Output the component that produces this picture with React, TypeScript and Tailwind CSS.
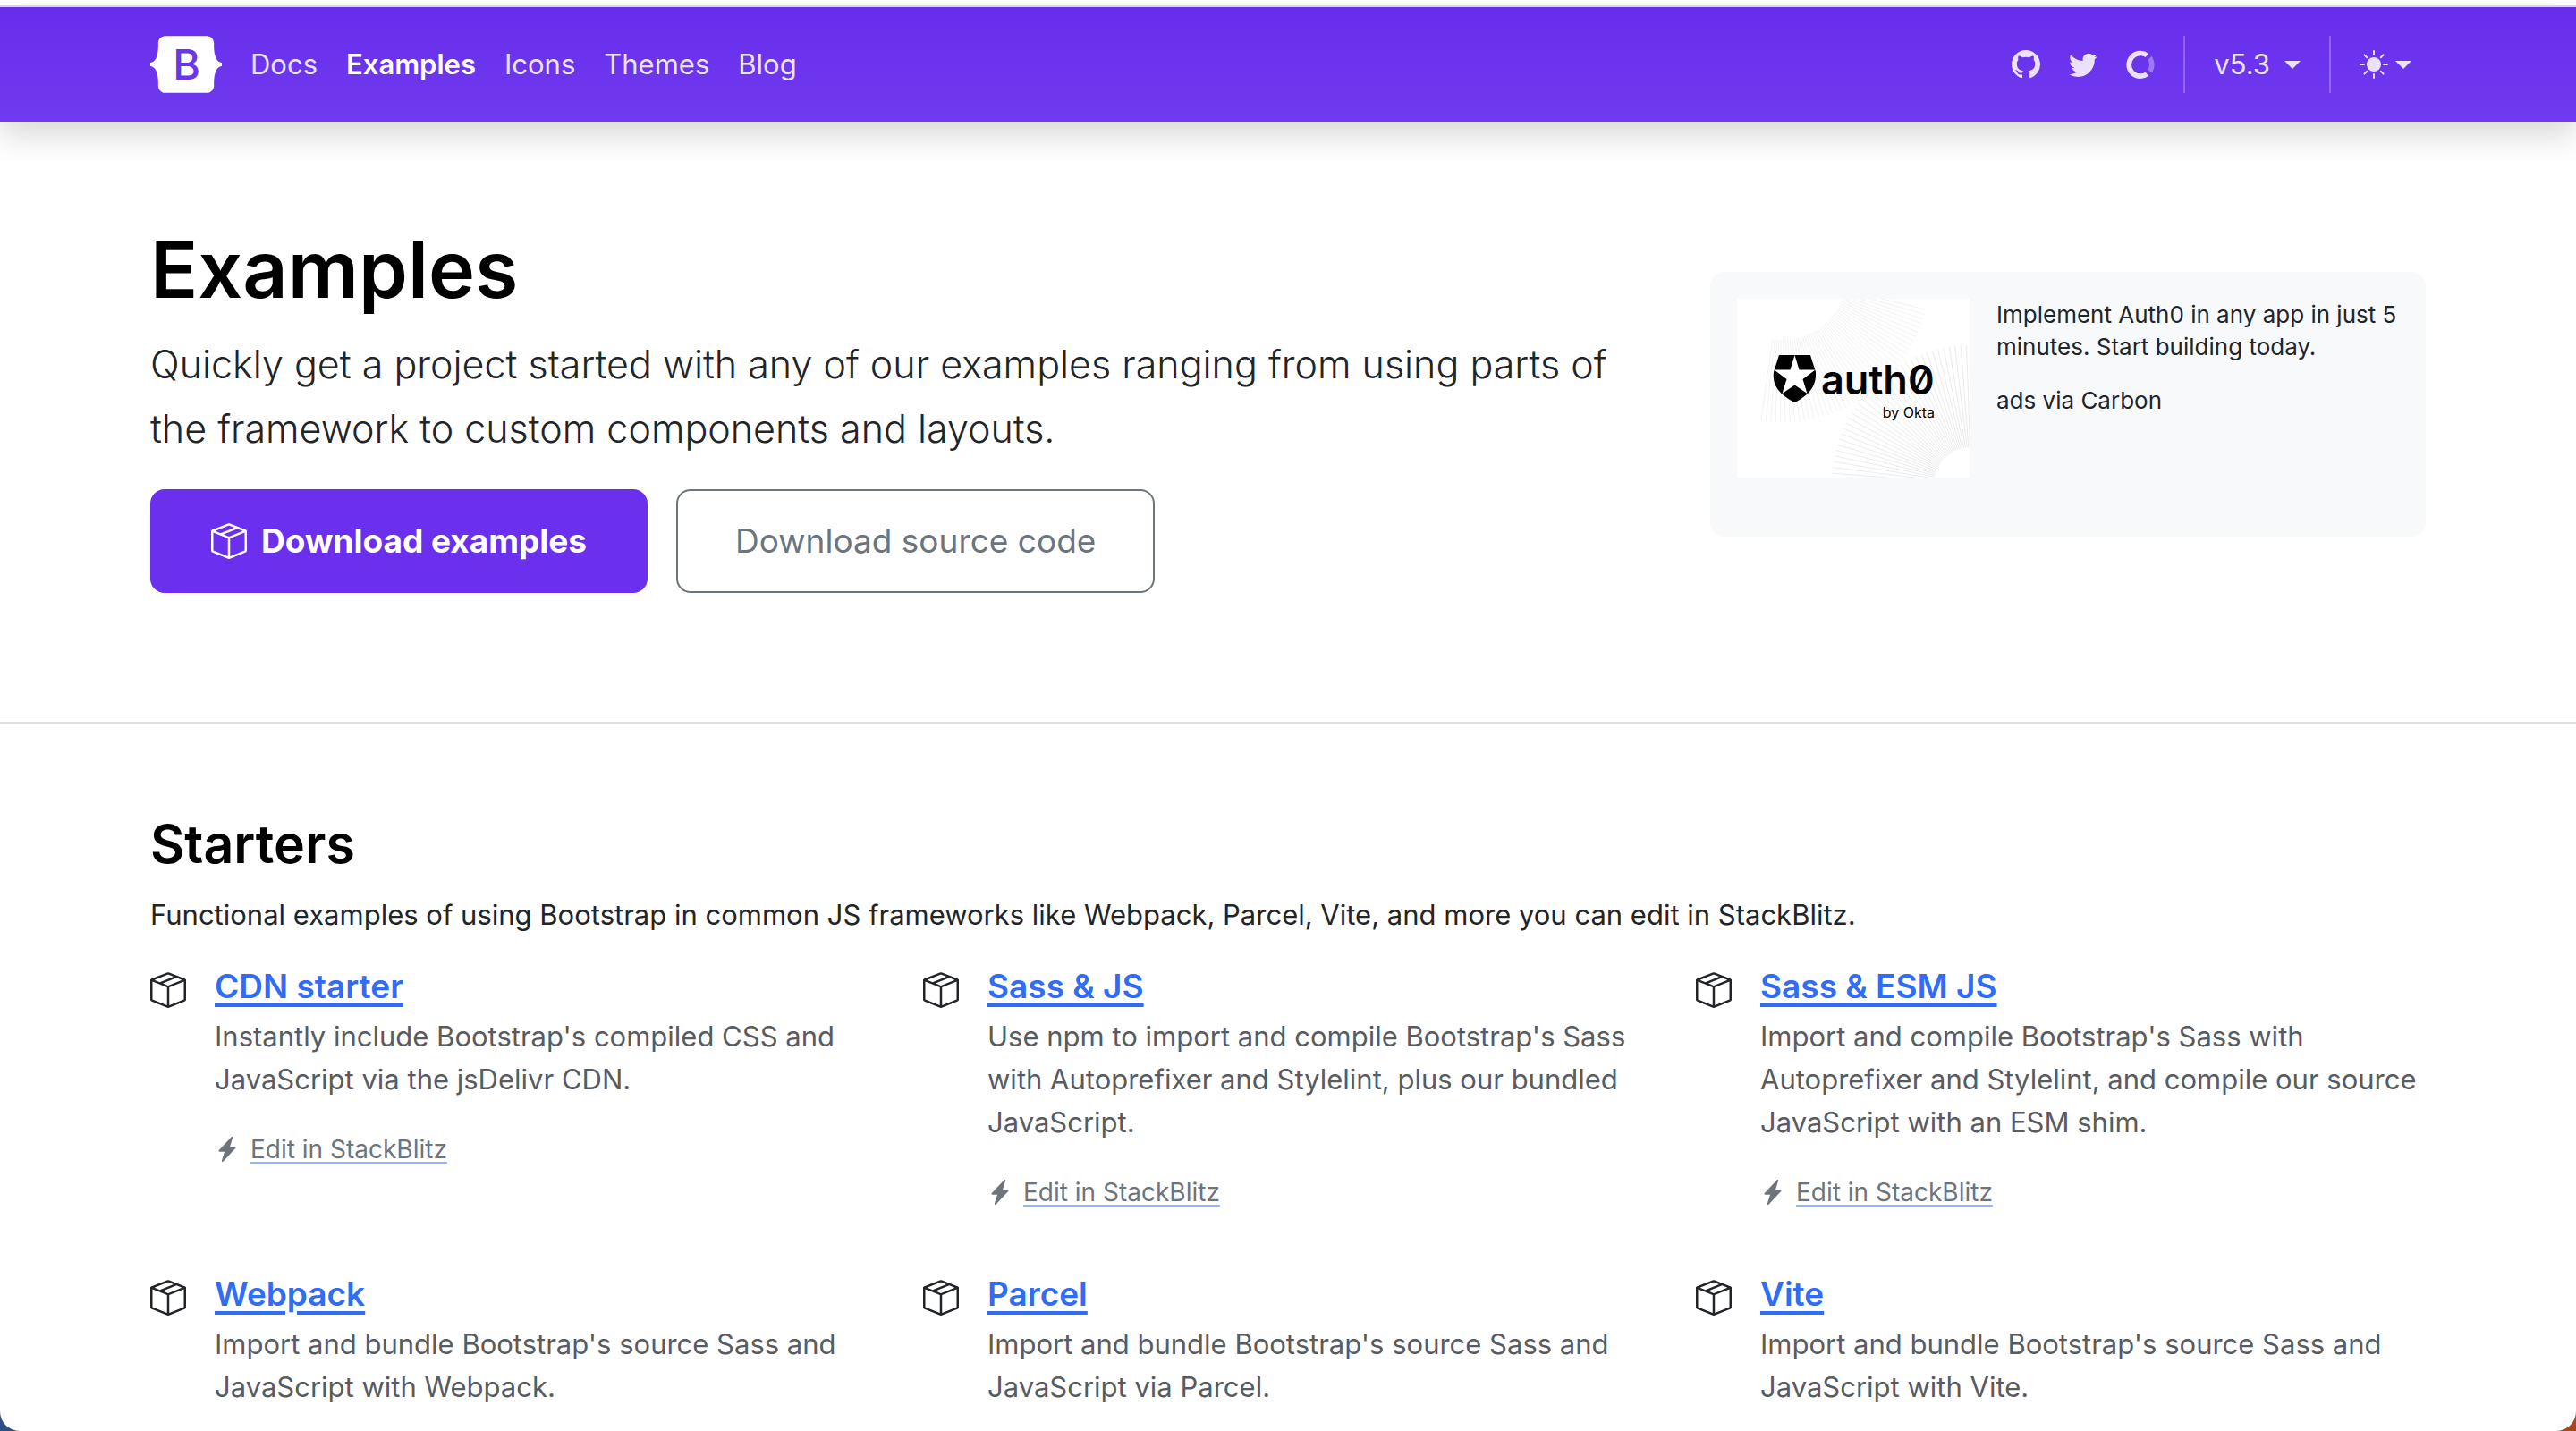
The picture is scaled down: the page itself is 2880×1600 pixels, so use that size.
import React from "react";
import { BsBoxSeam, BsGithub, BsTwitter, BsLightningChargeFill, BsSunFill } from "react-icons/bs";

const navLinks = [
  { label: "Docs", active: false },
  { label: "Examples", active: true },
  { label: "Icons", active: false },
  { label: "Themes", active: false },
  { label: "Blog", active: false },
];

const starters = [
  { title: "CDN starter", text: "Instantly include Bootstrap's compiled CSS and JavaScript via the jsDelivr CDN.", edit: true },
  { title: "Sass & JS", text: "Use npm to import and compile Bootstrap's Sass with Autoprefixer and Stylelint, plus our bundled JavaScript.", edit: true },
  { title: "Sass & ESM JS", text: "Import and compile Bootstrap's Sass with Autoprefixer and Stylelint, and compile our source JavaScript with an ESM shim.", edit: true },
  { title: "Webpack", text: "Import and bundle Bootstrap's source Sass and JavaScript with Webpack.", edit: false },
  { title: "Parcel", text: "Import and bundle Bootstrap's source Sass and JavaScript via Parcel.", edit: false },
  { title: "Vite", text: "Import and bundle Bootstrap's source Sass and JavaScript with Vite.", edit: false },
];

function BrandMark() {
  return (
    <svg viewBox="0 0 118 94" className="h-16 w-20" role="img" aria-label="Bootstrap">
      <path
        fill="#fff"
        d="M24.509 0c-6.733 0-11.715 5.893-11.492 12.284.214 6.14-.064 14.092-2.066 20.577C8.943 39.365 5.547 43.485 0 44.014v5.972c5.547.529 8.943 4.649 10.951 11.153 2.002 6.485 2.28 14.437 2.066 20.577C12.794 88.106 17.776 94 24.51 94H93.5c6.733 0 11.714-5.893 11.491-12.284-.214-6.14.064-14.092 2.066-20.577 2.009-6.504 5.396-10.624 10.943-11.153v-5.972c-5.547-.529-8.934-4.649-10.943-11.153-2.002-6.484-2.28-14.437-2.066-20.577C105.214 5.894 100.233 0 93.5 0H24.508z"
      />
      <text x="60" y="72" textAnchor="middle" fontFamily="Inter, sans-serif" fontSize="69" fontWeight="500" fill="#6d34ef">
        B
      </text>
    </svg>
  );
}

function OpenCollective() {
  return (
    <svg viewBox="0 0 40 41" className="size-8" fill="currentColor" fillRule="evenodd" aria-hidden="true">
      <path fillOpacity=".4" d="M32.8 21c0 2.4-.8 4.9-2 6.9l5.1 5.1c2.5-3.4 4.1-7.6 4.1-12 0-4.6-1.6-8.8-4-12.2L30.7 14c1.2 2 2 4.3 2 7z" />
      <path d="M20 33.7a12.8 12.8 0 0 1 0-25.6c2.6 0 5 .7 7 2.1L32 5a20 20 0 1 0 .1 31.9l-5-5.2a13 13 0 0 1-7 2z" />
    </svg>
  );
}

function Caret() {
  return <span aria-hidden="true" className="border-x-[9px] border-t-[9px] border-x-transparent border-t-current" />;
}

function fan(cx: number, cy: number, r1: number, r2: number, from: number, to: number, count: number) {
  return Array.from({ length: count }, (_, i) => {
    const a = ((from + ((to - from) * i) / (count - 1)) * Math.PI) / 180;
    const c = Math.cos(a);
    const s = Math.sin(a);
    return `M${(cx + r1 * c).toFixed(1)} ${(cy + r1 * s).toFixed(1)}L${(cx + r2 * c).toFixed(1)} ${(cy + r2 * s).toFixed(1)}`;
  }).join("");
}

function AdArtwork() {
  return (
    <svg viewBox="0 0 260 200" className="h-[200px] w-[260px] shrink-0 bg-white" role="img" aria-label="auth0 by Okta">
      <g fill="none" strokeWidth="1">
        <path stroke="#ebebeb" d={fan(262, 208, 42, 156, 180, 268, 38)} />
        <path stroke="#f2f2f2" d={fan(50, -28, 74, 166, 14, 98, 46)} />
      </g>
      <path d="M47 63H82L88 82C89 98 80 108 64.5 116C49 108 39 98 41 82Z" fill="#000" />
      <path
        d="M64.5 63L69.5 79.5H87.5L73.5 90L78.5 106L64.5 96.5L50.5 106L55.5 90L41.5 79.5H59.5Z"
        fill="#fff"
      />
      <text x="94" y="107" fontFamily="Inter, sans-serif" fontSize="45" fontWeight="600" fill="#000" style={{ fontFeatureSettings: '"zero"' }}>
        auth0
      </text>
      <text x="221" y="133" textAnchor="end" fontFamily="Inter, sans-serif" fontSize="16" fill="#000">by Okta</text>
    </svg>
  );
}

export default function App() {
  return (
    <div className="h-screen overflow-hidden bg-linear-to-r from-[#2f4f83] to-[#a5471c] font-['Inter',sans-serif] text-[#212529]">
      <div className="flex h-full flex-col overflow-hidden rounded-b-[22px] bg-white">
        <div className="h-2 shrink-0 border-b-2 border-[#dcdcdc] bg-white" />
        <header className="relative shrink-0 bg-linear-to-b from-[#672dec] to-[#703aef] px-[168px] shadow-[0_16px_32px_rgba(0,0,0,0.15)]">
          <nav className="flex h-32 items-center text-[31px] text-[#ebe1fd]">
            <a href="#home" className="mr-4"><BrandMark /></a>
            <ul className="flex">
              {navLinks.map((l) => (
                <li key={l.label}>
                  <a href="#nav" className={l.active ? "px-4 font-semibold text-white" : "px-4"}>{l.label}</a>
                </li>
              ))}
            </ul>
            <div className="ml-auto flex items-center">
              <div className="flex items-center gap-8">
                <a href="#github" aria-label="GitHub"><BsGithub className="size-8" /></a>
                <a href="#twitter" aria-label="Twitter"><BsTwitter className="size-8" /></a>
                <a href="#opencollective" aria-label="Open Collective"><OpenCollective /></a>
              </div>
              <span className="mx-8 h-16 w-0.5 bg-white/25" />
              <button type="button" className="flex items-center gap-4">v5.3 <Caret /></button>
              <span className="mx-8 h-16 w-0.5 bg-white/25" />
              <button type="button" aria-label="Toggle theme" className="mr-4 flex items-center gap-2">
                <BsSunFill className="size-8" /> <Caret />
              </button>
            </div>
          </nav>
        </header>

        <main className="grow">
          <section className="flex items-start justify-between border-b-2 border-[#dee2e6] px-[168px] pt-28 pb-36">
            <div className="w-[1660px]">
              <h1 className="text-[88px] leading-[107px] font-semibold text-black">Examples</h1>
              <p className="mt-4 text-[43px] leading-[72px] font-[350]">
                Quickly get a project started with any of our examples ranging from using parts of the framework to custom components and layouts.
              </p>
              <div className="mt-8 flex gap-8 text-[37px]">
                <button type="button" className="flex h-[116px] items-center gap-4 rounded-2xl bg-[#6a30ee] px-[68px] font-bold text-white">
                  <BsBoxSeam className="size-10" /> Download examples
                </button>
                <button type="button" className="h-[116px] rounded-2xl border-2 border-[#6c757d] px-16 text-[#6c757d]">
                  Download source code
                </button>
              </div>
            </div>
            <aside className="mt-14 flex min-h-[296px] w-[800px] items-start gap-[30px] rounded-2xl bg-[#f8f9fb] p-[30px] text-[26px] leading-9">
              <AdArtwork />
              <div>
                <p><a href="#ad">Implement Auth0 in any app in just 5 minutes. Start building today.</a></p>
                <p className="mt-6"><a href="#carbon">ads via Carbon</a></p>
              </div>
            </aside>
          </section>

          <section className="px-[168px] pt-24">
            <h2 className="text-[59px] leading-[78px] font-semibold text-black">Starters</h2>
            <p className="mt-4 text-[31px] leading-12">
              Functional examples of using Bootstrap in common JS frameworks like Webpack, Parcel, Vite, and more you can edit in StackBlitz.
            </p>
            <div className="mt-8 grid grid-cols-3 gap-x-12 gap-y-[66px]">
              {starters.map((s) => (
                <article key={s.title} className="flex items-start gap-8">
                  <BsBoxSeam className="mt-2 size-10 shrink-0" />
                  <div>
                    <h3 className="text-[37px] leading-12 font-semibold text-[#316cf4]">
                      <a href="#starter" className="underline decoration-4 underline-offset-6">{s.title}</a>
                    </h3>
                    <p className="mt-2 text-[31px] leading-12 text-[#585b5f]">{s.text}</p>
                    {s.edit && (
                      <a href="#stackblitz" className="mt-[30px] flex h-12 items-center gap-3 text-[28px] text-[#6c757d]">
                        <BsLightningChargeFill className="size-7" />
                        <span className="underline decoration-[#98b5fa] decoration-2 underline-offset-4">Edit in StackBlitz</span>
                      </a>
                    )}
                  </div>
                </article>
              ))}
            </div>
          </section>
        </main>
      </div>
    </div>
  );
}
